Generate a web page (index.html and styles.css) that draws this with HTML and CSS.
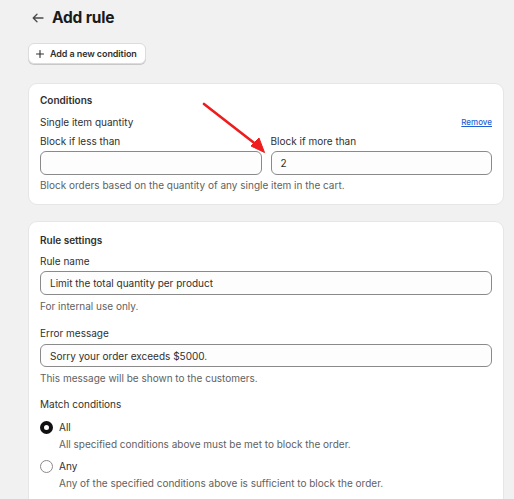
FILE: index.html
```html
<!DOCTYPE html>
<html lang="en">
<head>
<meta charset="utf-8">
<title>Add rule</title>
<link rel="stylesheet" href="styles.css">
</head>
<body>
<div class="page">
  <header class="header">
    <button class="back" aria-label="Back">
      <svg width="12" height="10" viewBox="0 0 12 10"><path d="M11 5H1.5M5 1.2L1.2 5L5 8.8" fill="none" stroke="#4a4a4a" stroke-width="1.3" stroke-linecap="round" stroke-linejoin="round"/></svg>
    </button>
    <h1 class="title">Add rule</h1>
  </header>

  <div class="actions">
    <button class="btn">
      <svg width="8" height="8" viewBox="0 0 8 8"><path d="M4 0.5V7.5M0.5 4H7.5" stroke="#303030" stroke-width="1.1" stroke-linecap="round"/></svg>
      <span>Add a new condition</span>
    </button>
  </div>

  <section class="card card-conditions">
    <h2 class="card-title">Conditions</h2>
    <div class="row-between">
      <span class="text">Single item quantity</span>
      <a class="link" href="#">Remove</a>
    </div>
    <div class="two-col">
      <div class="field">
        <label class="label">Block if less than</label>
        <div class="input"></div>
      </div>
      <div class="field">
        <label class="label">Block if more than</label>
        <div class="input">2</div>
      </div>
    </div>
    <p class="help">Block orders based on the quantity of any single item in the cart.</p>
  </section>

  <section class="card card-settings">
    <h2 class="card-title">Rule settings</h2>
    <div class="field field-name">
      <label class="label">Rule name</label>
      <div class="input">Limit the total quantity per product</div>
      <p class="help">For internal use only.</p>
    </div>
    <div class="field field-error">
      <label class="label">Error message</label>
      <div class="input">Sorry your order exceeds $5000.</div>
      <p class="help">This message will be shown to the customers.</p>
    </div>
    <div class="field field-match">
      <span class="label">Match conditions</span>
      <div class="radio-row">
        <span class="radio radio-checked"></span>
        <span class="text">All</span>
      </div>
      <p class="radio-help">All specified conditions above must be met to block the order.</p>
      <div class="radio-row radio-row-2">
        <span class="radio"></span>
        <span class="text">Any</span>
      </div>
      <p class="radio-help">Any of the specified conditions above is sufficient to block the order.</p>
    </div>
  </section>

  <svg class="annotation" width="80" height="60" viewBox="0 0 80 60">
    <path d="M4 2L58 44" stroke="#ee1c1c" stroke-width="2.6" stroke-linecap="round"/>
    <path d="M51 44L64.5 50.5L59 36Z" fill="#ee1c1c" stroke="#ee1c1c" stroke-width="1" stroke-linejoin="round"/>
  </svg>
</div>
</body>
</html>
```

FILE: styles.css
```css
* { box-sizing: border-box; }
html, body { margin: 0; padding: 0; }
body {
  background: #f1f1f1;
  font-family: Inter, "Noto Sans", "Liberation Sans", sans-serif;
  color: #303030;
  font-size: 10px;
  line-height: 14px;
}
.page {
  position: relative;
  padding: 6px 10px 0 28px;
  height: 499px;
  overflow: hidden;
}
.header {
  display: flex;
  align-items: center;
  height: 24px;
  padding-left: 4px;
}
.back {
  border: 0;
  background: none;
  padding: 0;
  width: 12px;
  height: 10px;
  display: flex;
  margin-right: 8px;
}
.title {
  margin: 0;
  font-size: 15.5px;
  font-weight: 700;
  line-height: 24px;
  color: #1a1a1a;
  letter-spacing: -0.2px;
}
.actions { margin-top: 13px; }
.btn {
  display: inline-flex;
  align-items: center;
  gap: 6px;
  height: 21px;
  padding: 0 8px 0 7px;
  border: 1px solid #dcdcdc;
  border-radius: 6px;
  background: #fff;
  box-shadow: 0 1px 0 #c8c8c8;
  font-family: inherit;
  font-size: 9px;
  font-weight: 600;
  color: #303030;
  letter-spacing: -0.1px;
}
.card {
  background: #fff;
  border-radius: 9px;
  border: 1px solid #e6e6e6;
  padding: 0 11px 0 11px;
}
.card-conditions {
  margin-top: 19px;
  padding-top: 9px;
  padding-bottom: 12px;
}
.card-settings {
  margin-top: 16px;
  padding-top: 11px;
  height: 300px;
}
.card-title {
  margin: 0;
  font-size: 10px;
  font-weight: 600;
  line-height: 14px;
  color: #303030;
}
.row-between {
  display: flex;
  justify-content: space-between;
  align-items: center;
  margin-top: 8px;
}
.text { color: #303030; }
.link {
  color: #1f5fd6;
  font-size: 8px;
  font-weight: 500;
  text-decoration: underline;
}
.two-col {
  display: grid;
  grid-template-columns: 1fr 1fr;
  gap: 9px;
  margin-top: 5px;
}
.field { display: flex; flex-direction: column; }
.label { color: #303030; }
.input {
  margin-top: 3px;
  height: 24px;
  border: 1px solid #8a8a8a;
  border-radius: 6px;
  background: #fdfdfd;
  padding: 0 9px;
  display: flex;
  align-items: center;
  color: #303030;
}
.help {
  margin: 3px 0 0;
  color: #616161;
}
.field-name { margin-top: 7px; }
.field-name .help { margin-top: 4px; }
.field-error { margin-top: 13px; }
.field-error .input { margin-top: 4px; height: 23px; }
.field-error .help { margin-top: 4px; }
.field-match { margin-top: 12px; }
.radio-row {
  display: flex;
  align-items: center;
  gap: 6px;
  margin-top: 9px;
}
.radio-row-2 { margin-top: 8px; }
.radio {
  width: 13px;
  height: 13px;
  border-radius: 50%;
  border: 1px solid #8a8a8a;
  background: #fff;
}
.radio-checked { border: 4px solid #111; }
.radio-help {
  margin: 3px 0 0 19px;
  color: #616161;
}
.annotation {
  position: absolute;
  left: 200px;
  top: 102px;
}
```
